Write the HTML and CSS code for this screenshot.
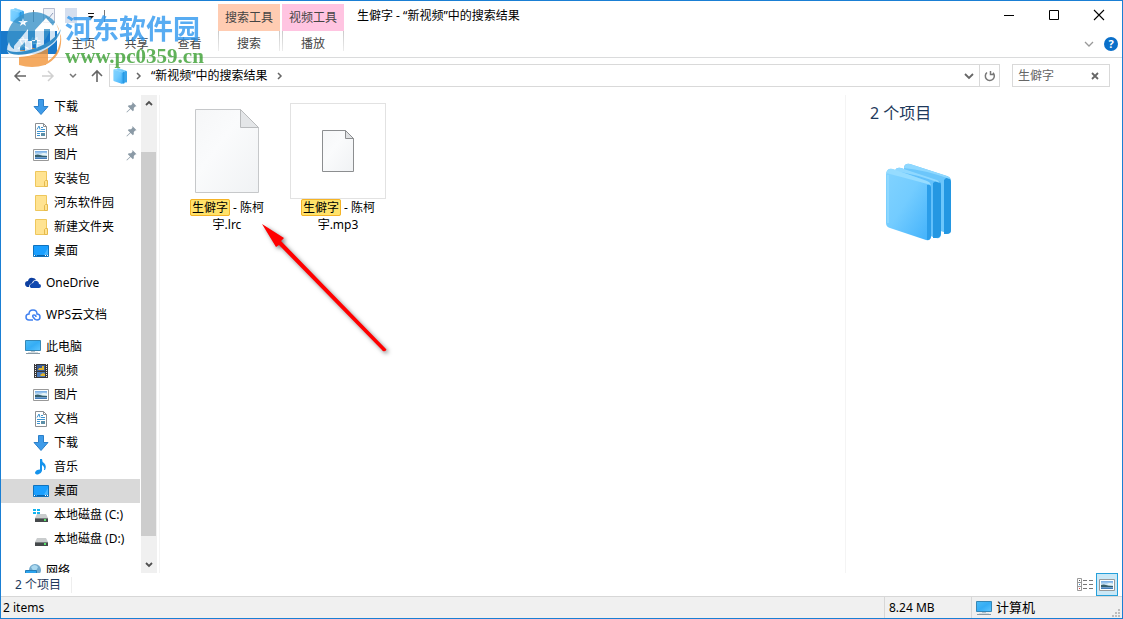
FILE: index.html
```html
<!DOCTYPE html>
<html lang="zh-CN">
<head>
<meta charset="utf-8">
<title>生僻字 - “新视频”中的搜索结果</title>
<link rel="stylesheet" href="styles.css">
</head>
<body>
<svg class="defs" width="0" height="0" aria-hidden="true">
  <defs>
    <linearGradient id="g-front" x1="0" y1="0" x2="1" y2="1"><stop offset="0" stop-color="#82d3ff"/><stop offset=".45" stop-color="#73ccff"/><stop offset="1" stop-color="#3fb0fb"/></linearGradient>
    <linearGradient id="g-screen" x1="0" y1="0" x2="1" y2="1"><stop offset="0" stop-color="#4dbcf6"/><stop offset=".5" stop-color="#35adf5"/><stop offset="1" stop-color="#5cc5ff"/></linearGradient>
    <linearGradient id="g-paper" x1="0" y1="0" x2="1" y2="1"><stop offset="0" stop-color="#f6f7f8"/><stop offset=".4" stop-color="#fafbfc"/><stop offset="1" stop-color="#f0f2f4"/></linearGradient>
    <linearGradient id="g-sky" x1="0" y1="0" x2="0" y2="1"><stop offset="0" stop-color="#6fa8e4"/><stop offset=".5" stop-color="#dceef8"/><stop offset="1" stop-color="#2f6db0"/></linearGradient>
    <symbol id="i-down" viewBox="0 0 16 16"><path d="M5.500.5h5v7h4.500L8 15.500 1 7.500h4.500z" fill="#3e9be9" stroke="#2b7fc9"/></symbol>
    <symbol id="i-doc" viewBox="0 0 16 16"><path d="M2.500.5h8l3 3v12h-11z" fill="#fff" stroke="#8b8f93"/><path d="M10.500.5v3h3" fill="none" stroke="#8b8f93"/><path d="M4 6.500 6 3l1 3.500M8 4.500h2M8 6.500h4M4 8.500h8M4 10.500h3M4 12.500h3" fill="none" stroke="#3d93cf"/><path d="M8 10h4v3H8z" fill="#5c8fa8"/></symbol>
    <symbol id="i-pic" viewBox="0 0 16 16"><path d="M.5 2.500h15v11H.5z" fill="#fff" stroke="#999"/><path d="M2 4h12v8H2z" fill="url(#g-sky)"/><path d="M2 8q3-1 5 0t7 1v1H2z" fill="#365f6c"/><path d="M8 7q3-2 6 0v1H9z" fill="#e8f4f5"/></symbol>
    <symbol id="i-folder" viewBox="0 0 16 16"><path d="M2.500.5h11v15h-11z" fill="#ffe391" stroke="#eec75c"/><path d="M12.500 9.500h2v6h-3v-5z" fill="#ffe391" stroke="#e5b94b"/></symbol>
    <symbol id="i-desk" viewBox="0 0 16 16"><path d="M.5 2.500h15v11H.5z" fill="#1a9fff" stroke="#0f72bd"/><path d="M10 13 15 5v8z" fill="#43b4ff"/><path d="M2 12.500h1M4 12.500h8M13 12.500h1" stroke="#0b63a8"/><path d="M1 12.500h1M12 12.500h1M14 12.500h1" stroke="#fff"/></symbol>
    <symbol id="i-pc" viewBox="0 0 16 16"><path d="M.5 1.500h15v10H.5z" fill="url(#g-screen)" stroke="#3687b5"/><path d="M6 12h4v1H6z" fill="#b7c3cb"/><path d="M1 14.500h14" stroke="#8799a5"/><path d="M3 13.500h10" stroke="#d3dbe0"/></symbol>
    <symbol id="i-drive" viewBox="0 0 16 16"><path d="M4 7h9l2 4H2z" fill="#c9cccd"/><path d="M2 11h13v4H2z" fill="#45494b"/><path d="M2 11.500h13" stroke="#777c7e"/><path d="M11 12h2v2h-2z" fill="#58e36b"/></symbol>
    <symbol id="i-cubes" viewBox="0 0 66 78">
      <path d="M19 4q1-4 6-3l37 12q4 1 4 5v49q0 4-4 3L23 58q-4-1-4-4z" fill="#6cc6fb"/>
      <path d="M61 15q5 0 5 4v48q0 4-4 4h-3V17z" fill="#2497e2"/>
      <path d="M19 5q1-5 6-4l37 12q2 1 3 3Q40 7 19 5" fill="#8fd8ff"/>
      <path d="M10 8q1-4 6-3l36 12q4 1 4 5v49q0 5-5 4L14 62q-4-1-4-4z" fill="#62c0fb"/>
      <path d="M51 18q5 0 5 4v48q0 5-5 5h-3V20z" fill="#2497e2"/>
      <path d="M10 8q1-4 6-3l36 12q2 1 3 3Q30 11 10 8" fill="#8fd8ff"/>
      <path d="M1 11q1-6 6-5l35 12q4 1 4 5v50q0 5-5 4L5 65q-4-1-4-5z" fill="url(#g-front)"/>
      <path d="M1 10q2-5 7-4l34 12q3 1 4 4-18-5-45-12" fill="#96dcff"/>
      <path d="M42 22q3-1 4 2v49q0 4-4 4z" fill="#2a9de9"/>
      <path d="M3 12v48" stroke="#9adeff" stroke-width="2" opacity=".6"/>
    </symbol>
    <symbol id="i-pin" viewBox="0 0 12 12"><path d="M7 0 11.500 4.500 10 5 8.500 6.500 8.500 9 7.500 10 5 7.500 1 11.500.5 11 4.500 7 2 4.500 3 3.500h2.500L7 2z" fill="#8b9aa6"/></symbol>
  </defs>
</svg>

<div class="window">
  <header class="ribbon">
    <div class="left">
      <div class="quick">
        <svg width="14" height="16"><use href="#i-cubes"/></svg>
        <i class="sep"></i>
        <button class="plain" aria-label="属性"><svg width="13" height="16"><path d="M.5.5h11v14H.5z" fill="#eef1f7" stroke="#b6bdd0"/><path d="m3 8 2 3 5-6" fill="none" stroke="#8c9cb9"/></svg></button>
        <button class="plain" aria-label="新建文件夹"><svg width="13" height="16"><path d="M0 0h12v15H0z" fill="#d5dfef"/></svg></button>
        <button class="plain" aria-label="自定义"><svg width="8" height="8"><path d="M1 1.500h6" stroke="#111"/><path d="M1 4h6L4 7z" fill="#111"/></svg></button>
        <i class="sep"></i>
      </div>
      <nav class="tabs">
        <button class="tab file">文件</button>
        <button class="tab">主页</button>
        <button class="tab">共享</button>
        <button class="tab">查看</button>
      </nav>
    </div>
    <div class="context search"><span>搜索工具</span><button>搜索</button></div>
    <div class="context video"><span>视频工具</span><button>播放</button></div>
    <h1 class="title">生僻字 - “新视频”中的搜索结果</h1>
    <div class="controls">
      <div class="caption">
        <button class="plain" aria-label="最小化"><svg width="12" height="12"><path d="M1 6.500h10" stroke="#000"/></svg></button>
        <button class="plain" aria-label="最大化"><svg width="12" height="12"><path d="M1.500 1.500h9v9h-9z" fill="none" stroke="#000"/></svg></button>
        <button class="plain" aria-label="关闭"><svg width="12" height="12"><path d="m1 1 10 10M11 1 1 11" stroke="#000" stroke-width="1.100"/></svg></button>
      </div>
      <div class="helpers">
        <button class="plain" aria-label="展开功能区"><svg width="10" height="8"><path d="m1 2 4 4 4-4" fill="none" stroke="#999" stroke-width="1.300"/></svg></button>
        <button class="help" aria-label="帮助">?</button>
      </div>
    </div>
  </header>

  <div class="address-row">
    <div class="history">
      <button class="plain" aria-label="后退"><svg width="14" height="12"><path d="M13 6H2M7 1 2 6l5 5" fill="none" stroke="#666" stroke-width="1.500"/></svg></button>
      <button class="plain" aria-label="前进"><svg width="14" height="12"><path d="M1 6h11M7 1l5 5-5 5" fill="none" stroke="#d0d0d0" stroke-width="1.500"/></svg></button>
      <button class="plain" aria-label="最近位置"><svg width="8" height="8"><path d="m1 2 3 3 3-3" fill="none" stroke="#777" stroke-width="1.500"/></svg></button>
      <button class="plain" aria-label="上移"><svg width="12" height="14"><path d="M6 13V2M1 7l5-5 5 5" fill="none" stroke="#666" stroke-width="1.600"/></svg></button>
    </div>
    <div class="address">
      <svg width="14" height="16"><use href="#i-cubes"/></svg>
      <svg class="crumb" width="6" height="8"><path d="m1 1 3 3-3 3" fill="none" stroke="#666" stroke-width="1.500"/></svg>
      <a href="#">“新视频”中的搜索结果</a>
      <svg class="crumb" width="6" height="8"><path d="m1 1 3 3-3 3" fill="none" stroke="#666" stroke-width="1.500"/></svg>
      <button class="plain drop" aria-label="以前的位置"><svg width="10" height="8"><path d="m1 2 4 4 4-4" fill="none" stroke="#666" stroke-width="1.800"/></svg></button>
      <button class="plain refresh" aria-label="刷新"><svg width="12" height="12"><path d="M3 2.500A4.500 4.500 0 1 0 9 2.800M6.500 1v3.500H10" fill="none" stroke="#777" stroke-width="1.500"/></svg></button>
    </div>
    <form class="searchbox">
      <input type="text" value="生僻字" aria-label="搜索">
      <button type="button" class="plain" aria-label="清除"><svg width="8" height="8"><path d="m1 1 6 6M7 1 1 7" stroke="#666" stroke-width="1.800"/></svg></button>
    </form>
  </div>

  <main class="body">
    <nav class="tree">
      <ul>
        <li class="child"><a href="#"><svg><use href="#i-down"/></svg>下载</a><svg class="pin"><use href="#i-pin"/></svg></li>
        <li class="child"><a href="#"><svg><use href="#i-doc"/></svg>文档</a><svg class="pin"><use href="#i-pin"/></svg></li>
        <li class="child"><a href="#"><svg><use href="#i-pic"/></svg>图片</a><svg class="pin"><use href="#i-pin"/></svg></li>
        <li class="child"><a href="#"><svg><use href="#i-folder"/></svg>安装包</a></li>
        <li class="child"><a href="#"><svg><use href="#i-folder"/></svg>河东软件园</a></li>
        <li class="child"><a href="#"><svg><use href="#i-folder"/></svg>新建文件夹</a></li>
        <li class="child"><a href="#"><svg><use href="#i-desk"/></svg>桌面</a></li>
      </ul>
      <ul>
        <li><a href="#"><svg viewBox="0 0 16 16"><path d="M2 12q-2-1-2-3 0-3 3-3 1-4 5-3 2 0 3 2-3 0-4 3-3 1-3 4z" fill="#0d3fa0"/><path d="M6 13q-2-1-1-3 1-2 3-2 1-3 4-2 2 1 2 3 2 0 2 2t-2 2z" fill="#1048b0"/></svg>OneDrive</a></li>
      </ul>
      <ul>
        <li><a href="#"><svg viewBox="0 0 16 16"><path d="M8 13H4Q1 13 1 10t3-3q0-4 4-4t4 4q3 0 3 3t-3 3q-2 0-4-3-1-2 1-2t2 2" fill="none" stroke="#4080f0" stroke-width="1.500"/></svg>WPS云文档</a></li>
      </ul>
      <ul>
        <li><a href="#"><svg><use href="#i-pc"/></svg>此电脑</a></li>
        <li class="child"><a href="#"><svg viewBox="0 0 16 16"><path d="M1 1h14v14H1z" fill="#38383a"/><path d="M2.500 1v14M13.500 1v14" stroke="#eee" stroke-dasharray="1 1"/><path d="M4 2h8v6H4z" fill="#3b5d94"/><path d="M4 9h8v5H4z" fill="#4979b9"/><path d="M6 5h3V3h2v4H5zM7 12l3-2 2 1v2H8z" fill="#e3b52d"/></svg>视频</a></li>
        <li class="child"><a href="#"><svg><use href="#i-pic"/></svg>图片</a></li>
        <li class="child"><a href="#"><svg><use href="#i-doc"/></svg>文档</a></li>
        <li class="child"><a href="#"><svg><use href="#i-down"/></svg>下载</a></li>
        <li class="child"><a href="#"><svg viewBox="0 0 16 16"><path d="M7 0h2q0 3 2 4 3 3 1 7l-1 0q1-3-2-5v6q-1 3-4 3.500-3 0-3-2 1-3 5-3z" fill="#1593ec"/></svg>音乐</a></li>
        <li class="child selected"><a href="#"><svg><use href="#i-desk"/></svg>桌面</a></li>
        <li class="child"><a href="#"><svg viewBox="0 0 16 16"><use href="#i-drive"/><path d="M0 2h3v2H0zM4 2h3v2H4zM0 5h3v2H0zM4 5h3v2H4z" fill="#12b4f0"/></svg>本地磁盘 (C:)</a></li>
        <li class="child"><a href="#"><svg><use href="#i-drive"/></svg>本地磁盘 (D:)</a></li>
      </ul>
      <ul>
        <li><a href="#"><svg viewBox="0 0 16 16"><circle cx="10" cy="7" r="6" fill="#72a9cc"/><path d="M6 4q4-4 7 0l-2 4q-3 1-5-4" fill="#a9d8ef"/><path d="M.5 7.500h11v6H.5z" fill="#2ba3ed" stroke="#247db8"/></svg>网络</a></li>
      </ul>
    </nav>
    <div class="scroll">
      <button class="plain" aria-label="向上滚动"><svg width="10" height="8"><path d="m2 5 3-3 3 3" fill="none" stroke="#505050" stroke-width="1.800"/></svg></button>
      <i class="above"></i><i class="thumb"></i><i class="below"></i>
      <button class="plain" aria-label="向下滚动"><svg width="10" height="8"><path d="m2 2 3 3 3-3" fill="none" stroke="#505050" stroke-width="1.800"/></svg></button>
    </div>
    <section class="files">
      <figure>
        <div class="thumbnail"><svg width="64" height="85" viewBox="0 0 64 85"><path d="M.5.5h45l18 18v65H.5z" fill="url(#g-paper)" stroke="#c6c8ca"/><path d="M45.500.5v18h18z" fill="#e4e6e8" stroke="#b9bbbd"/></svg></div>
        <figcaption><mark>生僻字</mark> - 陈柯<br>宇.lrc</figcaption>
      </figure>
      <figure>
        <div class="thumbnail framed"><svg width="32" height="43" viewBox="0 0 32 43"><path d="M.5.500h23l8 8v33H.5z" fill="url(#g-paper)" stroke="#8c8e90"/><path d="M23.500.5v8h8z" fill="#dfe1e3" stroke="#8c8e90"/></svg></div>
        <figcaption><mark>生僻字</mark> - 陈柯<br>宇.mp3</figcaption>
      </figure>
      <svg class="arrow" width="150" height="145" viewBox="0 0 150 145" aria-hidden="true"><path d="m12 9 22 14-3 3 105 108q1 1-1 2-2 1-3-1L29 30l-3 2z" fill="#ff0000"/></svg>
    </section>
    <aside class="details">
      <h2>2 个项目</h2>
      <svg width="66" height="78"><use href="#i-cubes"/></svg>
    </aside>
  </main>

  <div class="summary">
    <span>2 个项目</span>
    <div class="views">
      <button class="plain" aria-label="详细信息"><svg width="16" height="14"><path d="M.5.500h4v12h-4zM.5 4.500h4M.5 8.500h4" fill="#fff" stroke="#999"/><path d="M6 2.500h4M12 2.500h4M6 6.500h4M12 6.500h4M6 10.500h4M12 10.500h4" stroke="#777"/><path d="M2 2h1v1H2z" fill="#555"/><path d="M2 6h1v1H2z" fill="#3d89cf"/><path d="M2 10h1v1H2z" fill="#d44"/></svg></button>
      <button class="active" aria-label="大图标"><svg width="16" height="16"><use href="#i-pic"/></svg></button>
    </div>
  </div>
  <footer class="status">
    <span class="count">2 items</span>
    <span class="size">8.24 MB</span>
    <span class="zone"><svg width="16" height="16"><use href="#i-pc"/></svg>计算机</span>
    <svg class="grip" width="9" height="9"><path d="M6 0h2v2H6zM3 3h2v2H3zM6 3h2v2H6zM0 6h2v2H0zM3 6h2v2H3zM6 6h2v2H6z" fill="#bdbdbd"/></svg>
  </footer>

  <div class="watermark">
    <svg width="60" height="60" viewBox="0 0 60 60">
      <path d="M2 30A27 27 0 0 1 50 12L40 30 12 42Q3 40 2 30" fill="#3a93c9"/>
      <path d="M51 13A28 28 0 0 1 43 51V36Q34 42 14 46v9q13 4 26 0Q58 46 56 26z" fill="#f2953a"/>
      <path d="M14 40h8v15h-8zM25 38h8v18h-8zM35 38h6v17h-6z" fill="#f2953a"/>
      <path d="M9 36 23 19v12h7V20L41 8l9 10v13l-5 2V19h-6v20l-7 2V30h-5v11h-7v-9l-5 5v5h-6z" fill="#fff"/>
      <path d="m18 8 1 3h4l-3 2 1 3-3-2-3 2 1-3-3-2h4z" fill="#fff"/>
      <path d="M4 32Q-1 43 7 46q11 3 29-4 16-7 21-21-7 12-22 17Q19 43 11 40q-6-2-7-8" fill="#fff"/>
      <path d="M1 39q7 6 27 0 21-7 28-20-3 16-26 23-24 7-29-3" fill="#3a93c9"/>
    </svg>
    <div class="brand"><strong>河东软件园</strong><span>www.pc0359.cn</span></div>
  </div>
</div>
</body>
</html>
```

FILE: styles.css
```css
* { box-sizing: border-box; }

body {
  margin: 0;
  background: #fff;
  color: #000;
  font: 12px/16px "Noto Sans", "Noto Sans CJK SC", sans-serif;
}

.defs { position: absolute; }
svg { display: block; flex: none; }
a { color: inherit; text-decoration: none; }
ul { list-style: none; margin: 0; padding: 0; }

button {
  margin: 0;
  padding: 0;
  border: 0;
  background: none;
  color: inherit;
  font: inherit;
}

.plain { display: grid; place-items: center; }

.window {
  position: relative;
  display: flex;
  flex-direction: column;
  height: 100vh;
  border: 1px solid #1a7fd4;
}

/* Ribbon */
.ribbon {
  display: flex;
  height: 57px;
  border-bottom: 1px solid #dadbdc;
}

.left { width: 217px; }

.quick {
  display: flex;
  align-items: center;
  gap: 9px;
  height: 30px;
  padding-left: 9px;
}

.sep { width: 1px; height: 12px; background: #777; }
.tabs { display: flex; height: 23px; color: #444; }
.tab { width: 53px; padding-top: 2px; }
.tab.file { width: 56px; background: #1979ca; color: #fff; }

.context {
  display: flex;
  flex-direction: column;
  width: 62px;
  margin: 3px 2px 0 0;
  color: #444;
  text-align: center;
}

.context span { height: 27px; line-height: 28px; }

.context button {
  height: 20px;
  padding-top: 5px;
  border: solid;
  border-width: 0 1px;
  border-image: linear-gradient(#c8c8c8, #eee) 1;
  line-height: 15px;
}

.context.search span { background: #ffccb2; }
.context.video span { background: #ffc4e1; }

.title {
  flex: 1;
  margin: 0;
  padding: 7px 0 0 11px;
  font-size: 12px;
  font-weight: 400;
}

.controls { padding: 8px 4px 0 0; }
.caption { display: flex; gap: 33px; padding-right: 13px; }

.helpers {
  display: flex;
  justify-content: flex-end;
  align-items: center;
  gap: 10px;
  padding-top: 16px;
}

.help {
  width: 14px;
  height: 14px;
  border-radius: 7px;
  background: #0a6fc9;
  color: #fff;
  font-weight: 700;
  font-size: 11px;
  line-height: 14px;
}

/* Address row */
.address-row {
  display: flex;
  align-items: center;
  padding: 6px 12px 8px;
}

.history { display: flex; align-items: center; gap: 14px; width: 96px; }

.address {
  display: flex;
  flex: 1;
  align-items: center;
  height: 23px;
  padding-left: 3px;
  border: 1px solid #d9d9d9;
}

.crumb { margin: 0 9px; }
.drop { width: 20px; margin-left: auto; }
.refresh { width: 20px; height: 21px; border-left: 1px solid #d9d9d9; }

.searchbox {
  display: flex;
  width: 98px;
  height: 23px;
  margin-left: 12px;
  border: 1px solid #d9d9d9;
}

.searchbox input {
  flex: 1;
  min-width: 0;
  padding: 0 5px;
  border: 0;
  background: none;
  color: #666;
  font: inherit;
  outline: 0;
}

.searchbox button { width: 28px; }

/* Body */
.body { display: flex; flex: 1; min-height: 0; }

.tree { width: 140px; overflow: hidden; }
.tree ul + ul { margin-top: 8px; }

.tree li {
  display: flex;
  align-items: center;
  height: 24px;
  padding: 0 4px 0 24px;
}

.tree .child { padding-left: 32px; }
.tree .selected { width: 139px; background: #d9d9d9; }

.tree a {
  display: flex;
  flex: 1;
  align-items: center;
  gap: 5px;
  white-space: nowrap;
}

.tree svg { width: 16px; height: 16px; }
.tree .pin { width: 11px; height: 11px; }

.scroll {
  display: flex;
  flex-direction: column;
  width: 16px;
  background: #f0f0f0;
}

.scroll button { height: 17px; }
.above { flex: 40; }
.thumb { flex: 384; margin-right: 1px; background: #cdcdcd; }
.below { flex: 20; }

.files {
  position: relative;
  display: flex;
  flex: 1;
  align-items: flex-start;
  gap: 15px;
  margin-left: 2px;
  padding: 8px 0 0 19px;
  border-left: 1px solid #f4f4f4;
}

figure { width: 96px; margin: 0; }
.thumbnail { display: grid; place-items: center; height: 96px; }
.framed { border: 1px solid #e2e2e2; }
figcaption { line-height: 17px; text-align: center; }

mark {
  padding: 0 2px;
  border-radius: 2px;
  outline: 1px solid #f5b326;
  outline-offset: -1px;
  background: #ffe26a;
  color: inherit;
}

.arrow {
  position: absolute;
  left: 90px;
  top: 120px;
  filter: drop-shadow(2px 2px 2px rgb(0 0 0 / 50%));
}

.details {
  width: 277px;
  padding: 8px 0 0 24px;
  border-left: 1px solid #f4f4f4;
}

.details h2 {
  margin: 0 0 40px;
  color: #1e395b;
  font-size: 16px;
  font-weight: 400;
  line-height: 20px;
}

.details svg { margin-left: 15px; }

/* Bottom bars */
.summary {
  display: flex;
  justify-content: space-between;
  align-items: center;
  height: 23px;
  padding: 0 4px 0 14px;
  color: #1e395b;
}

.summary > span { padding-right: 10px; border-right: 1px solid #eee; }
.views { display: flex; gap: 3px; }

.views .active {
  display: grid;
  place-items: center;
  width: 22px;
  height: 23px;
  border: 1px solid #26a0da;
  background: #cbe8f6;
}

.status {
  display: flex;
  align-items: center;
  height: 22px;
  border-top: 1px solid #d7d7d7;
  background: #f0f0f0;
}

.count { flex: 1; padding-left: 2px; }
.size, .zone { height: 21px; border-left: 1px solid #d7d7d7; line-height: 21px; }
.size { width: 87px; padding-left: 4px; }

.zone {
  display: flex;
  align-items: center;
  gap: 4px;
  width: 141px;
  padding-left: 4px;
  font-size: 13px;
}

.grip { align-self: flex-end; margin-right: 1px; }

/* Site mark over the ribbon */
.watermark {
  position: absolute;
  left: 4px;
  top: 9px;
  display: flex;
  opacity: .8;
  pointer-events: none;
}

.brand { display: flex; flex-direction: column; margin-top: 4px; }

.brand strong {
  color: #2f98f0;
  font: 700 27px/28px "Noto Sans CJK SC", sans-serif;
}

.brand span {
  margin-top: 3px;
  color: #3a9f32;
  font: 700 21px/22px "Liberation Serif", serif;
}
```
